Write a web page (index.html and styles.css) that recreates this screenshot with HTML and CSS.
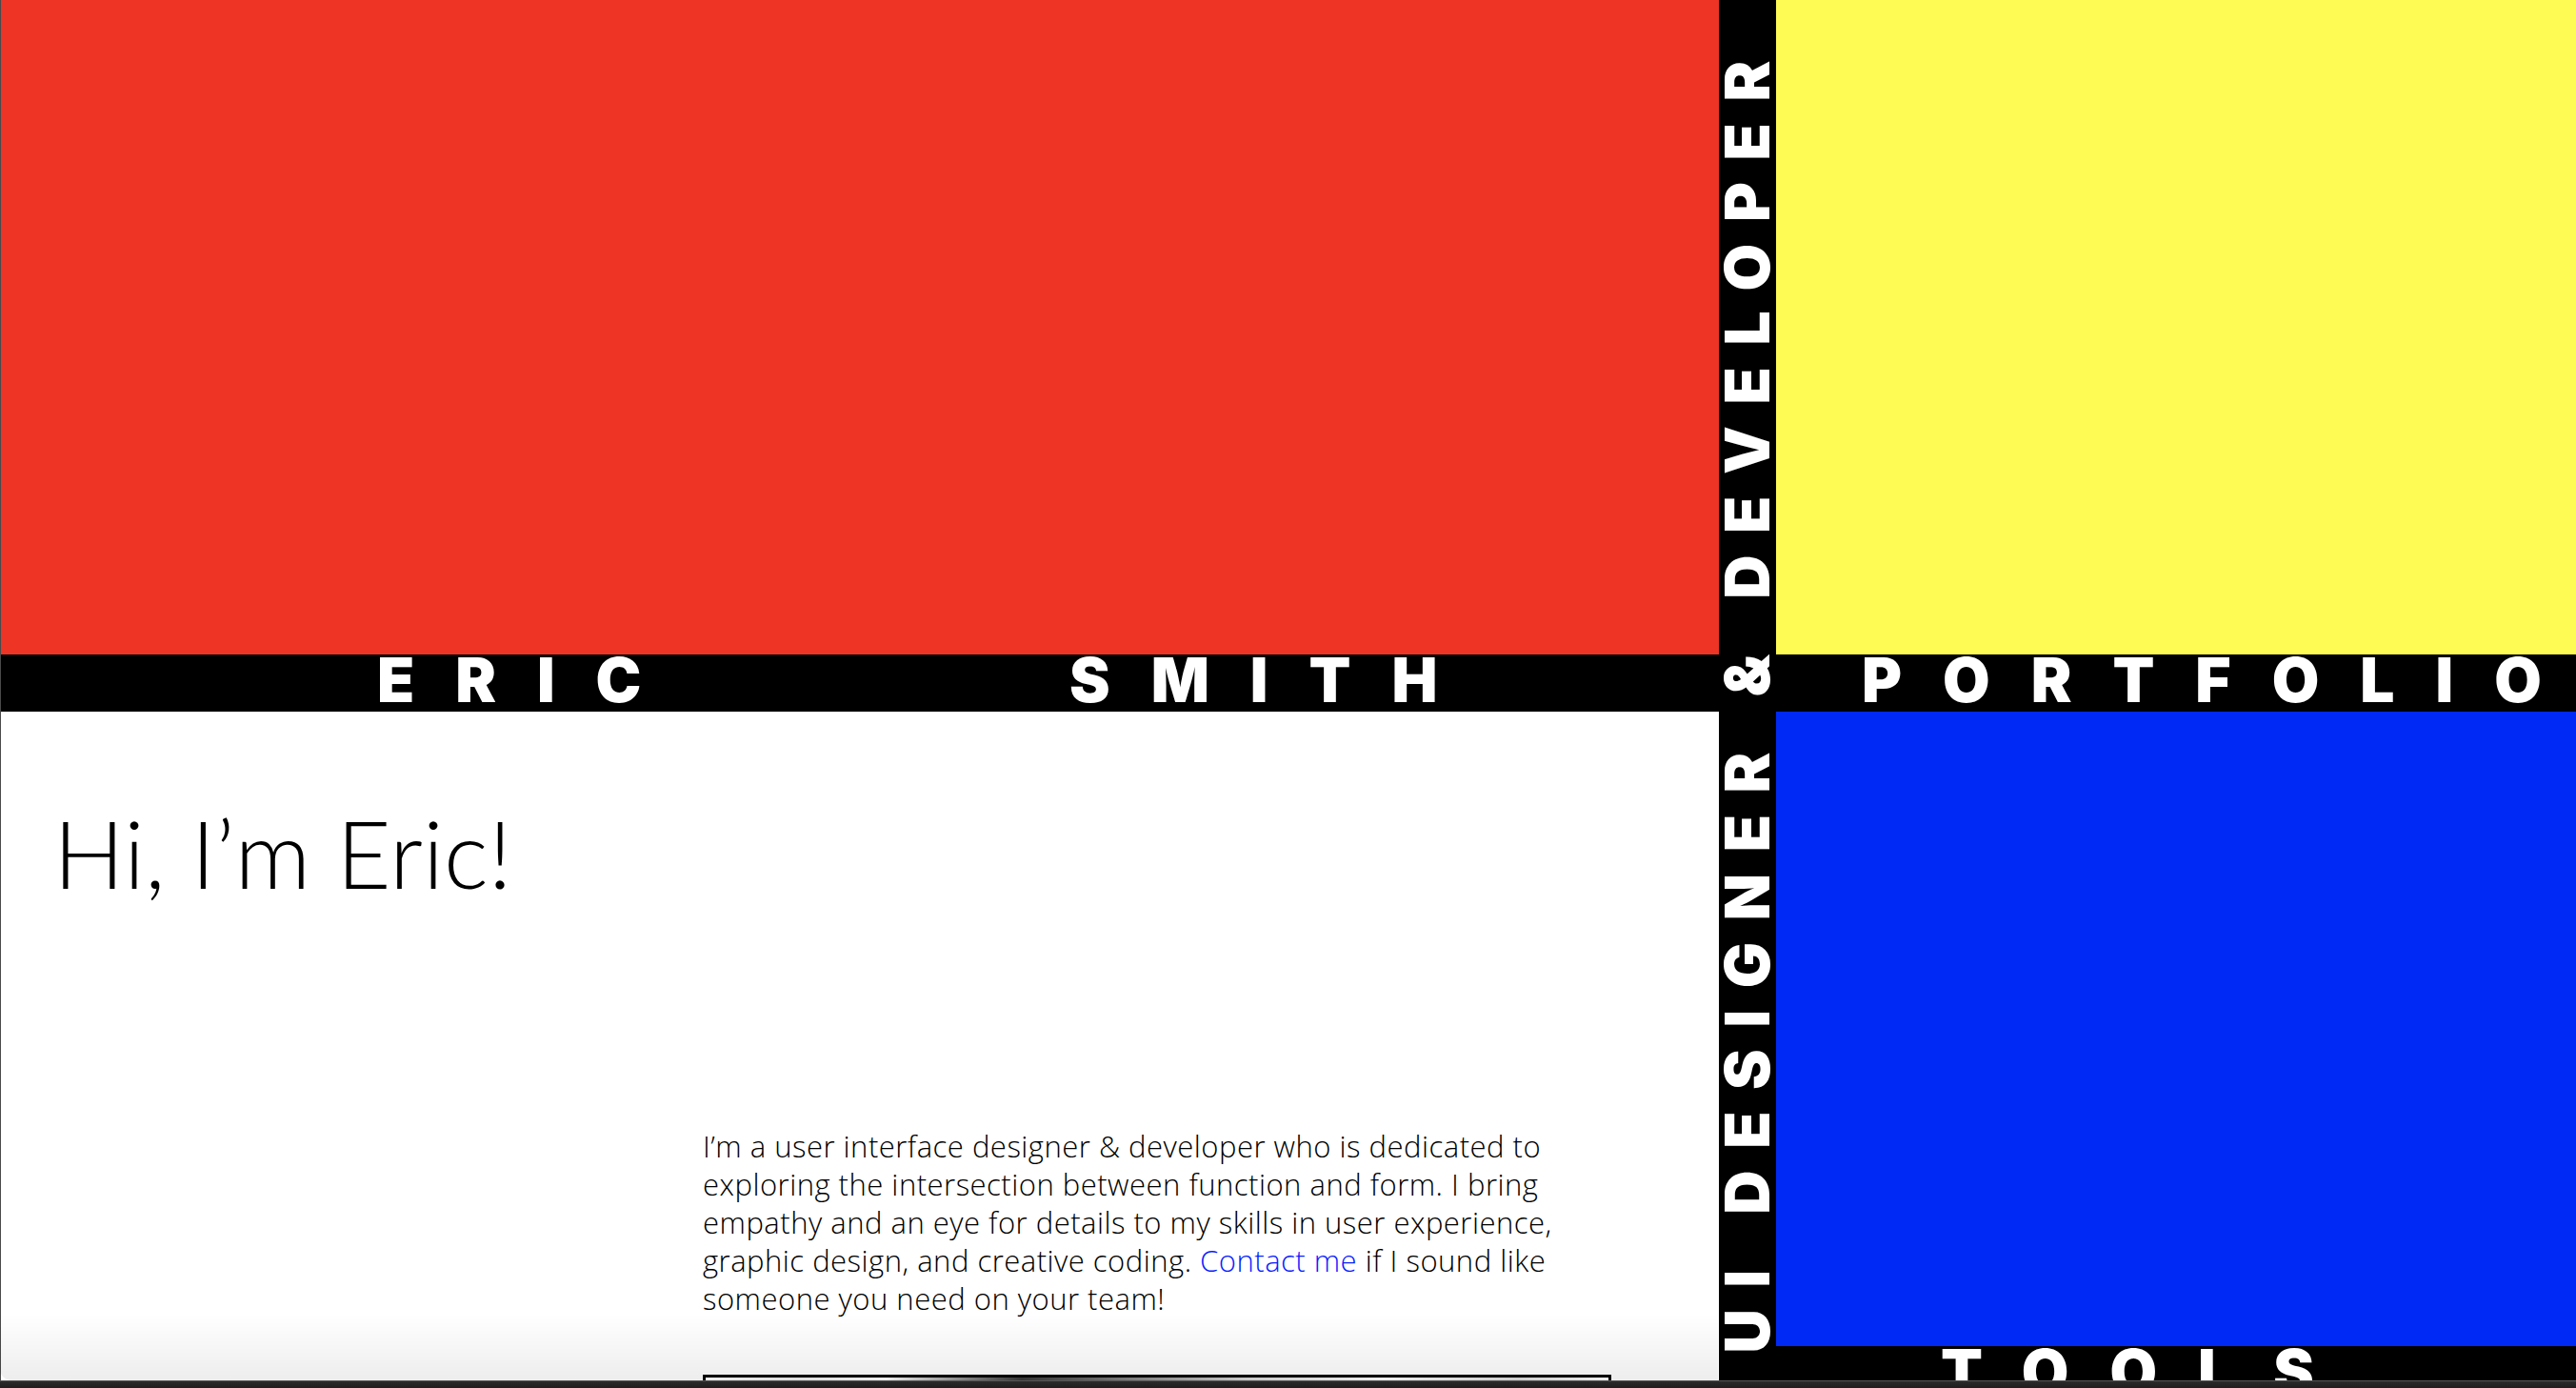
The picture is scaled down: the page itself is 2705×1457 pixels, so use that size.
FILE: index.html
```html
<!DOCTYPE html>
<html lang="en">
<head>
<meta charset="utf-8">
<title>Eric Smith — UI Designer &amp; Developer Portfolio</title>
<link rel="stylesheet" href="styles.css">
</head>
<body>
<div class="page">
  <section class="block red"></section>
  <div class="vband"><span class="vtext">UI DESIGNER &amp; DEVELOPER</span></div>
  <section class="block yellow"></section>
  <div class="hband name"><span class="first">ERIC</span><span class="last">SMITH</span></div>
  <div class="hband portfolio"><span>PORTFOLIO</span></div>
  <main class="about">
    <h1>Hi, I’m Eric!</h1>
    <p>I’m a user interface designer &amp; developer who is dedicated to exploring the intersection between function and form. I bring empathy and an eye for details to my skills in user experience, graphic design, and creative coding. <a href="#">Contact me</a> if I sound like someone you need on your team!</p>
    <div class="shot"></div>
  </main>
  <section class="block blue"></section>
  <div class="hband tools"><span>TOOLS</span></div>
  <section class="block rest"></section>
</div>
<div class="shade"></div>
<div class="chrome"></div>
</body>
</html>
```
FILE: styles.css
```css
html, body {
  margin: 0;
  padding: 0;
  background: #000;
}
body {
  overflow: hidden;
  height: 1457px;
}
.page {
  display: grid;
  grid-template-columns: 1804px 60px 1fr;
  grid-template-rows: 687px 60px 666px 60px 600px;
  background: #000;
  border-left: 1px solid #4a4a4a;
  box-sizing: border-box;
}
.red { grid-column: 1; grid-row: 1; background: #ee3424; }
.yellow { grid-column: 3; grid-row: 1; background: #fffb55; }
.blue { grid-column: 3; grid-row: 3; background: #0029f5; }
.rest { grid-column: 3; grid-row: 5; background: #000; }

.vband {
  grid-column: 2;
  grid-row: 1 / -1;
  background: #000;
  display: flex;
  flex-direction: column;
  align-items: center;
}
.vtext {
  writing-mode: vertical-rl;
  transform: rotate(180deg);
  font-family: "Inter", "DejaVu Sans", sans-serif;
  font-weight: 900;
  font-size: 64px;
  line-height: 60px;
  letter-spacing: 22.7px;
  color: #fff;
  margin-top: 41px;
  white-space: nowrap;
}

.hband {
  background: #000;
  display: flex;
  align-items: flex-start;
  font-family: "Inter", "DejaVu Sans", sans-serif;
  font-weight: 900;
  font-size: 64px;
  line-height: 53px;
  letter-spacing: 43px;
  color: #fff;
  white-space: nowrap;
}
.name { grid-column: 1; grid-row: 2; padding-left: 395px; }
.name .first { flex: 0 0 727px; }
.portfolio { grid-column: 3; grid-row: 2; padding-left: 90px; }
.tools { grid-column: 3; grid-row: 4; padding-left: 173px; }

.about {
  grid-column: 1;
  grid-row: 3 / -1;
  background: #fff;
  padding: 98px 113px 0 55px;
  color: #000;
}
.about h1 {
  margin: 0;
  font-family: "Lato", "Open Sans", sans-serif;
  font-weight: 300;
  font-size: 99px;
  line-height: 99px;
}
.about p {
  width: 954px;
  margin: 239px 0 0 auto;
  font-family: "Open Sans", "Lato", sans-serif;
  font-weight: 300;
  font-size: 31px;
  letter-spacing: 0.5px;
  line-height: 40px;
  color: #000;
}
.about a {
  color: #0a1eff;
  text-decoration: none;
}
.shot {
  width: 954px;
  height: 500px;
  margin: 60px 0 0 auto;
  border: 3px solid #000;
  box-sizing: border-box;
  background: linear-gradient(90deg, #fff 0%, #eee 10%, #fff 20%, #3a3a3a 35%, #d9d9d9 60%, #fff 75%, #ddd 90%, #fff 100%);
}

.shade {
  position: fixed;
  left: 0;
  bottom: 8px;
  width: 1804px;
  height: 70px;
  background: linear-gradient(to bottom, rgba(0,0,0,0), rgba(0,0,0,0.07));
  border-bottom-left-radius: 12px;
  pointer-events: none;
}
.chrome {
  position: fixed;
  left: 0;
  right: 0;
  bottom: 0;
  height: 8px;
  background: linear-gradient(to bottom, #555 0, #555 1px, #2b2b2b 1px, #1e1e1e 100%);
}
```
